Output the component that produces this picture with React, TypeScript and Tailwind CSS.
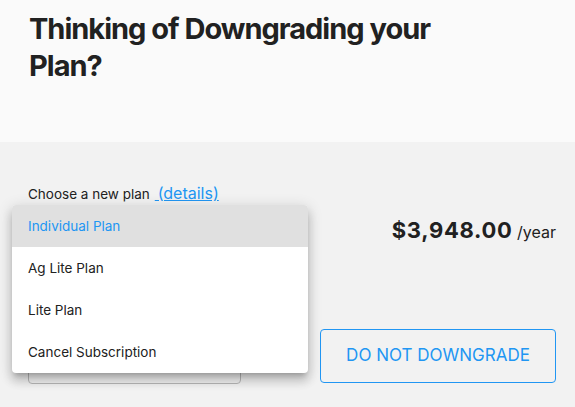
import React from 'react';

const plans = ['Individual Plan', 'Ag Lite Plan', 'Lite Plan', 'Cancel Subscription'];

export default function App() {
  return (
    <div className="relative w-[575px] h-[407px] overflow-hidden bg-[#f2f2f2] text-[#212121] font-['Inter','Noto_Sans',sans-serif]">
      {/* Header */}
      <div className="h-[142px] bg-[#fafafa] px-[29px] pt-[10px]">
        <h1 className="w-[460px] text-[29px] font-bold leading-[37px] tracking-[-1px]">
          Thinking of Downgrading your Plan?
        </h1>
      </div>

      {/* Body */}
      <div className="flex justify-between pl-[28px] pr-[19px] pt-[42px]">
        <div className="flex flex-col w-[213px]">
          <p className="text-[13.5px] leading-[18px] whitespace-nowrap">
            Choose a new plan
            <a href="#" className="ml-[5px] text-[16px] text-[#2196f3] underline underline-offset-1">{'\u2009(details)'}</a>
          </p>
          <div className="mt-[125px] h-[56px] rounded-[4px] border border-[#b8b8b8]" />
        </div>

        <div className="flex flex-col items-end pt-[30px]">
          <p className="whitespace-nowrap">
            <span className="text-[22px] font-bold tracking-[0.7px]">$3,948.00</span>
            <span className="text-[16px]"> /year</span>
          </p>
          <button className="mt-[82px] w-[236px] h-[54px] rounded-[4px] border border-[#2196f3] text-[17px] text-[#2196f3]">
            DO NOT DOWNGRADE
          </button>
        </div>
      </div>

      {/* Open select menu */}
      <ul className="absolute left-[12px] top-[205px] w-[296px] rounded-[4px] bg-white overflow-hidden shadow-[0px_5px_5px_-3px_rgba(0,0,0,0.2),0px_8px_10px_1px_rgba(0,0,0,0.14),0px_3px_14px_2px_rgba(0,0,0,0.12)]">
        {plans.map((p, i) => (
          <li
            key={p}
            className={`h-[42px] flex items-center px-[16px] text-[13.5px] ${i === 0 ? 'bg-[#e0e0e0] text-[#2196f3]' : ''}`}
          >
            {p}
          </li>
        ))}
      </ul>
    </div>
  );
}
